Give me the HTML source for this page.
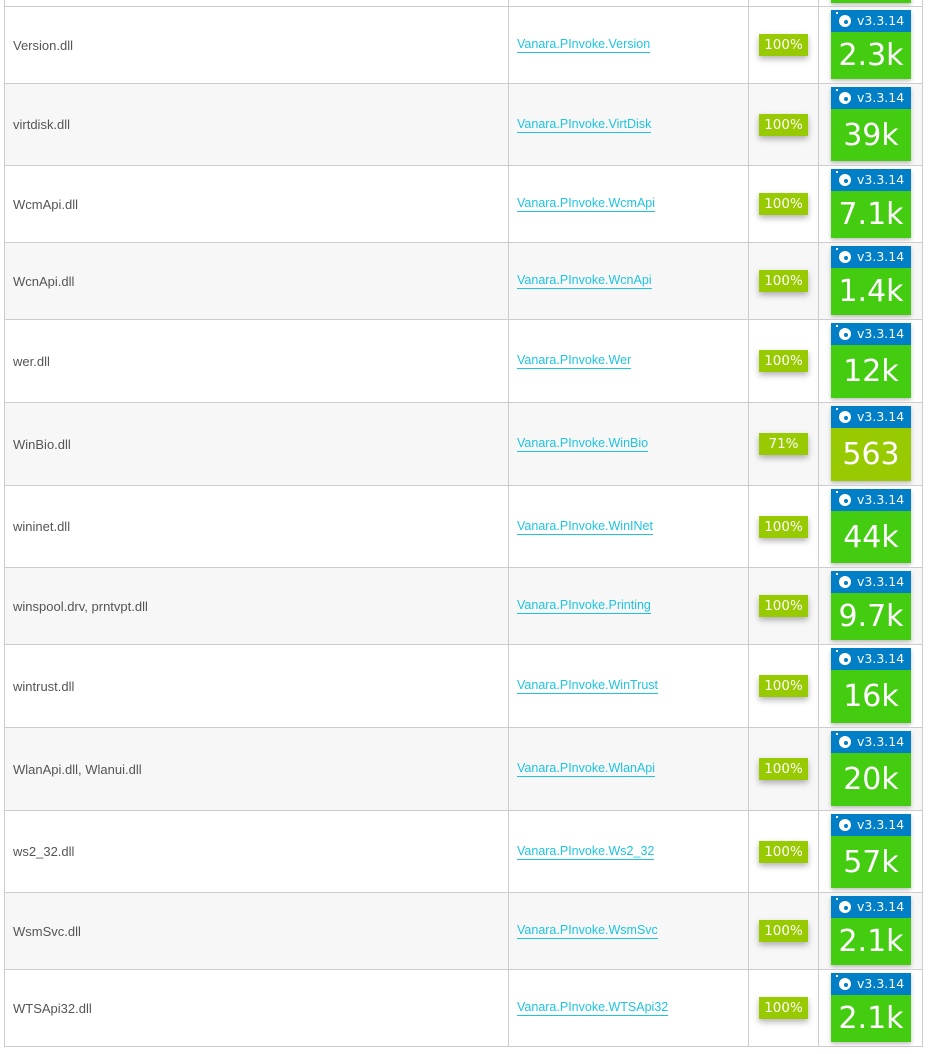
<!DOCTYPE html><html><head><style>
body{margin:0;width:928px;height:1054px;background:#fff;font-family:"Liberation Sans",sans-serif;position:relative;overflow:hidden}
.r{position:absolute;left:4px;width:919px;border-top:1px solid #ccc;box-sizing:border-box}
.c{position:absolute;top:0;bottom:0;display:flex;align-items:center;box-sizing:border-box}
.n{left:0;width:504px;padding-left:8px;font-size:13px;color:#555;border-left:1px solid #ccc}
.l{left:504px;width:240px;padding-left:8px;font-size:12.5px;color:#1fc4e0;border-left:1px solid #ccc}
.l span{border-bottom:1px solid #1fc4e0;line-height:15px}
.p{left:744px;width:70px;border-left:1px solid #ccc;justify-content:center}
.p span{background:#97ca00;color:#fff;width:49px;height:22px;line-height:22px;text-align:center;box-shadow:0 3px 6px rgba(0,0,0,.3);font-family:"DejaVu Sans",sans-serif;font-size:13.5px}
.b{left:814px;width:105px;border-left:1px solid #ccc;border-right:1px solid #ccc}
.bd{position:absolute;left:12px;top:3px;bottom:4px;width:80px;box-shadow:0 2px 4px rgba(0,0,0,.25)}
.bh{height:22px;background:#007ec6;color:#fff;font-family:"DejaVu Sans",sans-serif;font-size:12.5px;line-height:22px;padding-left:26px;position:relative}
.bh i{position:absolute;left:8px;top:5px;width:12px;height:12px;border-radius:50%;background:#fff}
.bh i:after{content:"";position:absolute;left:5px;top:5px;width:4px;height:4px;border-radius:50%;background:#007ec6}
.bh i:before{content:"";position:absolute;left:-3px;top:-3px;width:2px;height:2px;background:#fff}
.bg{position:absolute;top:22px;bottom:0;left:0;right:0;background:#44cc11;color:#fff;font-family:"DejaVu Sans",sans-serif;font-size:30px;display:flex;align-items:center;justify-content:center}
.y{background:#97ca00}
.g{background:#f7f7f7}
</style></head><body>
<div class="r" style="top:-10px;height:17px"><div class="c n"></div><div class="c l"></div><div class="c p"></div><div class="c b"><div class="bd" style="top:-10px"><div class="bg" style="top:0"></div></div></div></div>
<div class="r" style="top:6px;height:77px"><div class="c n">Version.dll</div><div class="c l"><span>Vanara.PInvoke.Version</span></div><div class="c p"><span>100%</span></div><div class="c b"><div class="bd"><div class="bh"><i></i>v3.3.14</div><div class="bg">2.3k</div></div></div></div>
<div class="r g" style="top:83px;height:82px"><div class="c n">virtdisk.dll</div><div class="c l"><span>Vanara.PInvoke.VirtDisk</span></div><div class="c p"><span>100%</span></div><div class="c b"><div class="bd"><div class="bh"><i></i>v3.3.14</div><div class="bg">39k</div></div></div></div>
<div class="r" style="top:165px;height:77px"><div class="c n">WcmApi.dll</div><div class="c l"><span>Vanara.PInvoke.WcmApi</span></div><div class="c p"><span>100%</span></div><div class="c b"><div class="bd"><div class="bh"><i></i>v3.3.14</div><div class="bg">7.1k</div></div></div></div>
<div class="r g" style="top:242px;height:77px"><div class="c n">WcnApi.dll</div><div class="c l"><span>Vanara.PInvoke.WcnApi</span></div><div class="c p"><span>100%</span></div><div class="c b"><div class="bd"><div class="bh"><i></i>v3.3.14</div><div class="bg">1.4k</div></div></div></div>
<div class="r" style="top:319px;height:83px"><div class="c n">wer.dll</div><div class="c l"><span>Vanara.PInvoke.Wer</span></div><div class="c p"><span>100%</span></div><div class="c b"><div class="bd"><div class="bh"><i></i>v3.3.14</div><div class="bg">12k</div></div></div></div>
<div class="r g" style="top:402px;height:83px"><div class="c n">WinBio.dll</div><div class="c l"><span>Vanara.PInvoke.WinBio</span></div><div class="c p"><span>71%</span></div><div class="c b"><div class="bd"><div class="bh"><i></i>v3.3.14</div><div class="bg y">563</div></div></div></div>
<div class="r" style="top:485px;height:82px"><div class="c n">wininet.dll</div><div class="c l"><span>Vanara.PInvoke.WinINet</span></div><div class="c p"><span>100%</span></div><div class="c b"><div class="bd"><div class="bh"><i></i>v3.3.14</div><div class="bg">44k</div></div></div></div>
<div class="r g" style="top:567px;height:77px"><div class="c n">winspool.drv, prntvpt.dll</div><div class="c l"><span>Vanara.PInvoke.Printing</span></div><div class="c p"><span>100%</span></div><div class="c b"><div class="bd"><div class="bh"><i></i>v3.3.14</div><div class="bg">9.7k</div></div></div></div>
<div class="r" style="top:644px;height:83px"><div class="c n">wintrust.dll</div><div class="c l"><span>Vanara.PInvoke.WinTrust</span></div><div class="c p"><span>100%</span></div><div class="c b"><div class="bd"><div class="bh"><i></i>v3.3.14</div><div class="bg">16k</div></div></div></div>
<div class="r g" style="top:727px;height:83px"><div class="c n">WlanApi.dll, Wlanui.dll</div><div class="c l"><span>Vanara.PInvoke.WlanApi</span></div><div class="c p"><span>100%</span></div><div class="c b"><div class="bd"><div class="bh"><i></i>v3.3.14</div><div class="bg">20k</div></div></div></div>
<div class="r" style="top:810px;height:82px"><div class="c n">ws2_32.dll</div><div class="c l"><span>Vanara.PInvoke.Ws2_32</span></div><div class="c p"><span>100%</span></div><div class="c b"><div class="bd"><div class="bh"><i></i>v3.3.14</div><div class="bg">57k</div></div></div></div>
<div class="r g" style="top:892px;height:77px"><div class="c n">WsmSvc.dll</div><div class="c l"><span>Vanara.PInvoke.WsmSvc</span></div><div class="c p"><span>100%</span></div><div class="c b"><div class="bd"><div class="bh"><i></i>v3.3.14</div><div class="bg">2.1k</div></div></div></div>
<div class="r" style="top:969px;height:78px;border-bottom:1px solid #ccc"><div class="c n">WTSApi32.dll</div><div class="c l"><span>Vanara.PInvoke.WTSApi32</span></div><div class="c p"><span>100%</span></div><div class="c b"><div class="bd"><div class="bh"><i></i>v3.3.14</div><div class="bg">2.1k</div></div></div></div>
</body></html>
